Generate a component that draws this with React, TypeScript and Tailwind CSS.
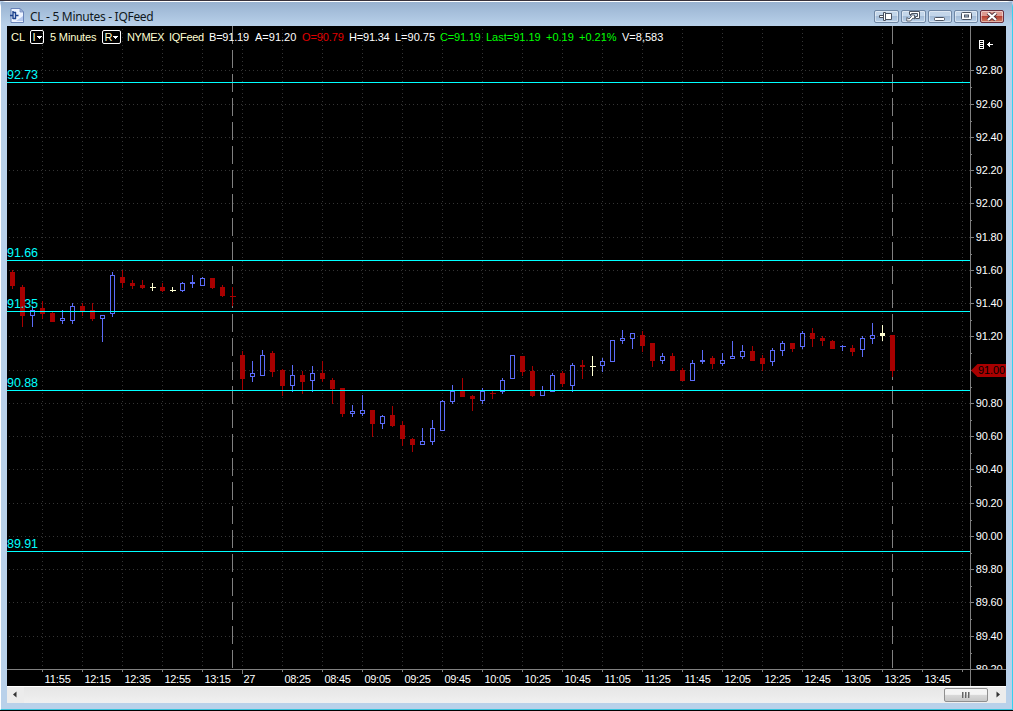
import React from "react";

type Kind = "u" | "d" | "n";
// kind, high, body top, body bottom, low (pixel rows in the pane, bottoms exclusive)
type Candle = [Kind, number, number, number, number];

const CANDLES: Candle[] = [
  ["d", 270, 272, 286, 289], ["d", 285, 287, 316, 327], ["u", 306, 310, 316, 327], ["d", 301, 308, 314, 319],
  ["d", 312, 313, 322, 322], ["u", 310, 318, 321, 324], ["u", 303, 306, 321, 324], ["d", 303, 306, 311, 316],
  ["d", 303, 310, 319, 321], ["u", 315, 315, 319, 342], ["u", 272, 275, 314, 317], ["d", 270, 277, 283, 288],
  ["d", 280, 283, 286, 289], ["d", 280, 285, 288, 289], ["n", 283, 287, 288, 291], ["d", 283, 287, 291, 292],
  ["n", 287, 290, 291, 292], ["u", 282, 283, 291, 292], ["u", 275, 282, 284, 288], ["u", 277, 278, 286, 286],
  ["d", 278, 278, 288, 289], ["d", 285, 287, 296, 297], ["d", 287, 296, 297, 306], ["d", 351, 355, 379, 390],
  ["u", 361, 373, 377, 382], ["u", 350, 355, 376, 376], ["d", 351, 353, 372, 377], ["d", 369, 370, 386, 396],
  ["u", 365, 375, 386, 392], ["d", 371, 375, 382, 394], ["u", 366, 373, 381, 392], ["d", 361, 373, 379, 382],
  ["d", 378, 380, 389, 404], ["d", 388, 388, 414, 417], ["u", 405, 411, 414, 417], ["u", 395, 410, 414, 416],
  ["d", 410, 410, 424, 437], ["u", 415, 416, 424, 429], ["d", 406, 415, 426, 427], ["d", 421, 425, 439, 446],
  ["d", 438, 439, 445, 452], ["u", 428, 441, 445, 445], ["u", 420, 428, 442, 445], ["u", 400, 401, 431, 431],
  ["u", 385, 391, 402, 404], ["d", 378, 390, 397, 397], ["d", 395, 396, 399, 411], ["u", 388, 391, 401, 404],
  ["d", 391, 393, 394, 399], ["u", 378, 380, 392, 394], ["u", 355, 355, 379, 379], ["d", 356, 356, 372, 376],
  ["d", 366, 371, 396, 397], ["u", 386, 390, 396, 396], ["u", 373, 375, 392, 392], ["d", 371, 373, 384, 387],
  ["u", 363, 365, 386, 392], ["d", 360, 365, 367, 379], ["n", 356, 366, 367, 376], ["u", 358, 361, 366, 372],
  ["u", 340, 340, 362, 362], ["u", 330, 338, 341, 344], ["u", 333, 333, 339, 349], ["d", 331, 335, 346, 352],
  ["d", 343, 343, 361, 367], ["u", 353, 356, 361, 364], ["d", 353, 356, 371, 371], ["d", 368, 370, 381, 381],
  ["u", 360, 363, 381, 381], ["u", 350, 360, 362, 364], ["d", 356, 358, 364, 369], ["u", 353, 360, 364, 366],
  ["u", 341, 356, 359, 359], ["u", 345, 351, 357, 359], ["d", 346, 351, 361, 361], ["d", 355, 358, 364, 371],
  ["u", 348, 350, 362, 366], ["u", 341, 343, 351, 356], ["d", 343, 343, 349, 352], ["u", 331, 333, 347, 349],
  ["d", 328, 333, 339, 347], ["d", 336, 338, 341, 346], ["d", 340, 341, 349, 349], ["u", 345, 346, 347, 351],
  ["d", 345, 348, 352, 356], ["u", 336, 338, 350, 357], ["u", 323, 335, 339, 344], ["n", 325, 333, 336, 341],
  ["d", 335, 335, 371, 377],
];

const COLORS: Record<Kind, string> = { u: "#5b6cf8", d: "#a80000", n: "#ffffd2" };
const GRID_Y = [70, 104, 137, 170, 203, 237, 270, 303, 336, 370, 403, 436, 469, 503, 536, 569, 602, 636];
const GRID_X = Array.from({ length: 24 }, (_, i) => 42 + i * 40);
const LEVELS: [number, string][] = [[82, "92.73"], [260, "91.66"], [311, "91.35"], [390, "90.88"], [551, "89.91"]];
const TIMES = [
  "11:55", "12:15", "12:35", "12:55", "13:15", "27", "08:25", "08:45", "09:05", "09:25", "09:45", "10:05",
  "10:25", "10:45", "11:05", "11:25", "11:45", "12:05", "12:25", "12:45", "13:05", "13:25", "13:45",
];

function CandleShape({ c, x }: { c: Candle; x: number }) {
  const [kind, high, top, bottom, low] = c;
  const color = COLORS[kind];
  const h = bottom - top;
  return (
    <g fill={color}>
      {top > high && <rect x={x} y={high} width={1} height={top - high} />}
      {low > bottom && <rect x={x} y={bottom} width={1} height={low - bottom} />}
      {kind === "u" && h > 2 ? (
        <rect x={x - 1.5} y={top + 0.5} width={4} height={h - 1} fill="#000" stroke={color} />
      ) : (
        <rect x={x - 2} y={top} width={h === 1 ? 6 : 5} height={h} />
      )}
    </g>
  );
}

function Chart() {
  return (
    <svg className="block" width="999" height="660" viewBox="7 26 999 660" shapeRendering="crispEdges" fontFamily="'Liberation Sans', Arial, sans-serif">
      <rect x="7" y="26" width="999" height="660" fill="#000" />
      <g stroke="#343434" strokeDasharray="1 3">
        {GRID_Y.map((y) => <line key={y} x1="9" x2="970" y1={y + 0.5} y2={y + 0.5} />)}
        {GRID_X.map((x) => <line key={x} x1={x + 0.5} x2={x + 0.5} y1="29" y2="669" />)}
      </g>
      <g stroke="#808080" strokeDasharray="18 6">
        <line x1="232.5" x2="232.5" y1="26" y2="669" />
        <line x1="892.5" x2="892.5" y1="26" y2="669" />
      </g>
      {CANDLES.map((c, i) => <CandleShape key={i} c={c} x={12 + i * 10} />)}
      {LEVELS.map(([y, label]) => (
        <g key={label} fill="#00ffff">
          <rect x="7" y={y} width="963" height="1" />
          <text x="7" y={y - 3} fontSize="12.5" textLength="31">{label}</text>
        </g>
      ))}
      <g fill="#808080">
        <rect x="970" y="26" width="1" height="660" />
        <rect x="7" y="669" width="999" height="1" />
        {GRID_Y.map((y) => <rect key={y} x="971" y={y} width="3" height="1" />)}
        {GRID_Y.map((y) => <rect key={y} x="971" y={y + 17} width="1" height="1" />)}
        {GRID_X.map((x) => <rect key={x} x={x} y="670" width="1" height={x === 242 ? 4 : 2} />)}
      </g>
      <g fill="#fff" fontSize="11">
        {GRID_Y.map((y, i) => i === 9 ? null : (
          <text key={y} x="975.7" y={y + 4} textLength="27">{(92.8 - i * 0.2).toFixed(2)}</text>
        ))}
        <svg x="971" y="660" width="35" height="9" viewBox="971 660 35 9">
          <text x="975.7" y="673" textLength="27">89.20</text>
        </svg>
        {TIMES.map((t, i) => (
          <text key={t} x={44.4 + i * 40 - (i === 5 ? 1 : 0)} y="683" textLength={t === "27" ? 12 : 26.5}>{t}</text>
        ))}
      </g>
      <path d="M971 370.5 L977.5 364 H1006 V377 H977.5 Z" fill="#a80000" shapeRendering="auto" />
      <text x="978" y="374" fontSize="11" fill="#000" textLength="27">91.00</text>
      <g stroke="#fff" fill="none">
        <path d="M979.5 40.5 H983.5 V48.5 H979.5 Z M980 42.5 H983 M980 44.5 H983 M980 46.5 H983" />
        <path d="M987 44.5 H993 M988.5 43 V46 M989.5 42 V47" />
      </g>
    </svg>
  );
}

function DropBox({ label, className }: { label: string; className: string }) {
  return (
    <span className={`mb-px flex h-[14px] shrink-0 items-center justify-center rounded-[2px] border border-white text-[#ffffd2] ${className}`}>
      {label}
      <svg width="5" height="3" className="ml-px" shapeRendering="crispEdges"><path d="M0 0H5V1H4V2H3V3H2V2H1V1H0Z" fill="#fff" /></svg>
    </span>
  );
}

function Quote({ text, className }: { text: string; className: string }) {
  return <span className={`shrink-0 ${className}`}>{text}</span>;
}

function WindowButton({ children, close = false, wide = false }: { children: React.ReactNode; close?: boolean; wide?: boolean }) {
  return (
    <span
      className={`flex h-[13px] items-center justify-center rounded-[2px] border shadow-[inset_0_0_0_1px_rgba(255,255,255,0.45)] ${wide ? "w-[25px]" : "w-6"} ${
        close
          ? "border-[#6b3040] bg-linear-to-b from-[#dd9a90] from-45% via-[#b94032] via-50% to-[#cc7a62]"
          : "border-[#6f87a5] bg-linear-to-b from-[#c3d6ea] from-45% via-[#a5bdd8] via-50% to-[#b8d0e9]"
      }`}
    >
      {children}
    </span>
  );
}

function TitleBar() {
  return (
    <div className="flex h-6 shrink-0 items-start justify-between bg-linear-to-b from-[#98b2d0] to-[#b9d1ea] pl-[9px] pr-2">
      <div className="flex">
        <svg width="15" height="16" className="mt-[6px]" viewBox="0 0 15 16">
          <path d="M1 .5H10L13.5 4V14.5H1Z" fill="#edf3ff" stroke="#6983b8" />
          <path d="M10 .5V4H13.5Z" fill="#a9bbdf" stroke="#6983b8" strokeWidth=".7" />
          <path d="M6 13H13V8Z" fill="#b6c9ef" />
          <path d="M0 7.5H2.5M3 3V11M3 4.5H6M5.5 4V11M3 10.5H6M6 7.5H8.5" stroke="#1d438f" strokeWidth="1.4" fill="none" />
        </svg>
        <span className="ml-[5px] mt-[6px] w-[140px] whitespace-nowrap font-['Noto_Sans',sans-serif] text-[12px] leading-[17px] tracking-[-0.3px] text-[#101820]">
          CL - 5 Minutes - IQFeed
        </span>
      </div>
      <div className="mt-2 flex gap-[2px]">
        <WindowButton wide>
          <svg width="15" height="9" viewBox="0 0 15 9"><path d="M.5 3.5H4.5V5.5H.5Z" fill="#fff" stroke="#4a5260" /><path d="M4.5 .5H6.5V1.5H12.5V7.5H6.5V8.5H4.5Z" fill="#fff" stroke="#4a5260" /><path d="M6.5 1V8" stroke="#4a5260" /></svg>
        </WindowButton>
        <WindowButton wide>
          <svg width="15" height="11" viewBox="0 0 15 11"><path d="M3.5 .5H13.5V7.5H9.5V5.5H11.5V2.5H5.5V3.5H3.5Z" fill="#fff" stroke="#4a5260" /><path d="M4 4H8.5V8L7 7L4.5 10H.8V6.5L3 8L5.5 5.5Z" fill="#fff" stroke="#4a5260" strokeWidth=".9" /></svg>
        </WindowButton>
        <WindowButton>
          <svg width="12" height="10" viewBox="0 0 12 10"><rect x=".5" y="5.5" width="10" height="3" rx="1" fill="#fff" stroke="#4a5260" /></svg>
        </WindowButton>
        <WindowButton>
          <svg width="11" height="9" viewBox="0 0 11 9"><rect x=".5" y=".5" width="10" height="7" rx="1" fill="#fff" stroke="#4a5260" /><rect x="3.5" y="3" width="4" height="2" fill="#b3c8df" stroke="#4a5260" /></svg>
        </WindowButton>
        <WindowButton close>
          <svg width="12" height="9" viewBox="0 0 12 9"><path d="M2 1L10 8M10 1L2 8" stroke="#543038" strokeWidth="4" /><path d="M2 1L10 8M10 1L2 8" stroke="#fff" strokeWidth="2.3" /></svg>
        </WindowButton>
      </div>
    </div>
  );
}

export default function App() {
  return (
    <div className="flex h-[711px] w-[1013px] flex-col overflow-hidden border-b border-black bg-[#b9d1ea]">
      <div className="h-px shrink-0 bg-[#37323c]" />
      <div className="flex min-h-0 grow flex-col rounded-t-[6px] border-b border-l border-r border-t border-b-[#37c4dc] border-l-white border-r-[#37d0ee] border-t-white">
        <TitleBar />
        <div className="ml-[6px] w-[999px]">
          <div className="relative h-[660px]">
            <Chart />
            <div className="absolute left-1 top-1 flex h-[15px] items-center gap-[6px] whitespace-nowrap font-['Liberation_Sans',Arial,sans-serif] text-[11px] leading-[15px] text-white">
              <Quote text="CL" className="w-[13px] text-[#ffffd2]" />
              <DropBox label="I" className="w-[14px]" />
              <Quote text="5 Minutes" className="w-[46px] text-[#ffffd2] tracking-[-0.15px]" />
              <DropBox label="R" className="w-[19px]" />
              <Quote text="NYMEX" className="w-9 text-[#ffffd2] tracking-[-0.4px]" />
              <Quote text="IQFeed" className="w-[34px] text-[#ffffd2] tracking-[-0.3px]" />
              <Quote text="B=91.19" className="w-10 tracking-[-0.2px]" />
              <Quote text="A=91.20" className="w-[41px]" />
              <Quote text="O=90.79" className="w-[41px] text-[#e00000] tracking-[-0.1px]" />
              <Quote text="H=91.34" className="w-10 tracking-[-0.2px]" />
              <Quote text="L=90.75" className="w-[39px]" />
              <Quote text="C=91.19" className="w-10 text-[#00ff00] tracking-[-0.2px]" />
              <Quote text="Last=91.19" className="w-[54px] text-[#00ff00]" />
              <Quote text="+0.19" className="w-[27px] text-[#00ff00]" />
              <Quote text="+0.21%" className="w-[37px] text-[#00ff00]" />
              <Quote text="V=8,583" className="w-[41px]" />
            </div>
          </div>
          <div className="flex h-[17px] items-center border-t border-white bg-[#ececec]">
            <svg width="17" height="16"><path d="M6 7.5L9.5 4.5V10.5Z" fill="#333" /></svg>
            <div className="flex h-4 grow justify-end bg-linear-to-b from-[#e6e6e6] to-[#f0f0f0]">
              <span className="mt-px flex h-[14px] w-11 items-center justify-center gap-px rounded-[2px] border border-[#8f8f8f] bg-linear-to-b from-[#f4f4f4] from-45% via-[#d9d9d9] via-50% to-[#c8c8c8]">
                <i className="h-[6px] w-[2px] border-l border-[#666] bg-[#aaa]" />
                <i className="h-[6px] w-[2px] border-l border-[#666] bg-[#aaa]" />
                <i className="h-[6px] w-[2px] border-l border-[#666] bg-[#aaa]" />
              </span>
            </div>
            <svg width="18" height="16"><path d="M8.5 4.5V10.5L12 7.5Z" fill="#333" /></svg>
          </div>
        </div>
      </div>
    </div>
  );
}
